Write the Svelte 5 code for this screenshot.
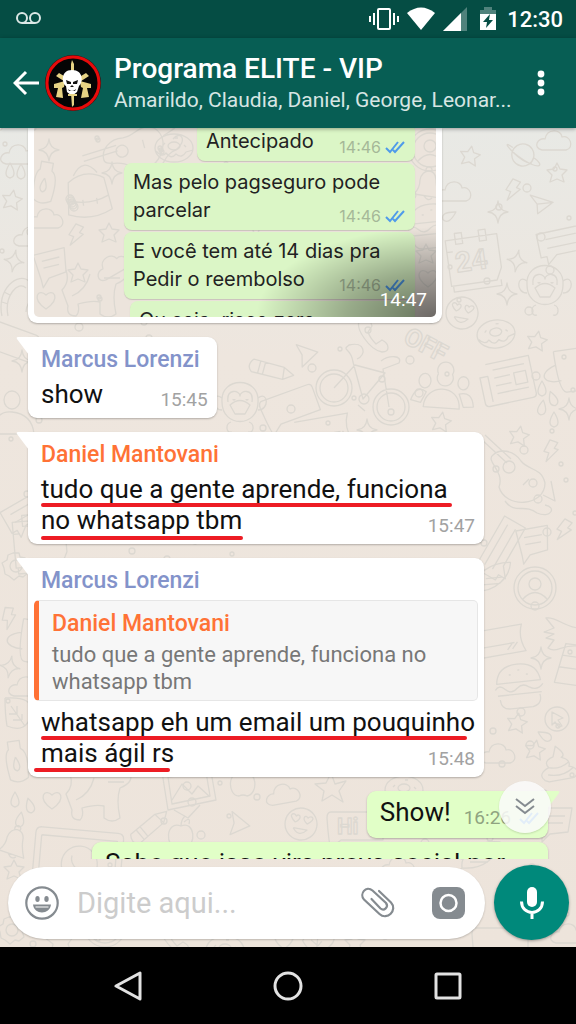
<script lang="ts">
    type Message = {
        author?: string;
        tone?: string;
        text: string;
        time: string;
        wide?: boolean;
        quote?: { author: string; text: string };
        marks?: number[][];
    };

    const contact = {
        name: 'Programa ELITE - VIP',
        members: 'Amarildo, Claudia, Daniel, George, Leonar...',
    };

    const forwarded = [
        { text: 'Antecipado', time: '14:46', size: 'short' },
        { text: 'Mas pelo pagseguro pode\nparcelar', time: '14:46', size: 'full' },
        { text: 'E você tem até 14 dias pra\nPedir o reembolso', time: '14:46', size: 'full' },
        { text: 'Ou seja, risco zero', time: '', size: 'medium' },
    ];

    // marks: [x1, x2, y] of each red pen stroke, from the bubble's corner
    const messages: Message[] = [
        { author: 'Marcus Lorenzi', tone: 'blue', text: 'show', time: '15:45' },
        {
            author: 'Daniel Mantovani',
            tone: 'orange',
            text: 'tudo que a gente aprende, funciona\nno whatsapp tbm',
            time: '15:47',
            wide: true,
            marks: [[15, 422, 73], [15, 213, 106]],
        },
        {
            author: 'Marcus Lorenzi',
            tone: 'blue',
            text: 'whatsapp eh um email um pouquinho\nmais ágil rs',
            time: '15:48',
            wide: true,
            quote: { author: 'Daniel Mantovani', text: 'tudo que a gente aprende, funciona no whatsapp tbm' },
            marks: [[15, 437, 180], [8, 140, 212]],
        },
    ];

    const shapes: Record<string, string> = {
        star: 'M0-10L3-4 10-3 5 2 7 9 0 6-7 9-5 2-10-3-3-4Z',
        sparkle: 'M0-11Q1-1 10 0Q1 1 0 11Q-1 1-10 0Q-1-1 0-11Z',
        bolt: 'M-2-11L6-9 3-3 7-2-4 11-2 2-7 1Z',
        heart: 'M0 9C-16-2-7-12 0-5C7-12 16-2 0 9Z',
        drop: 'M0-8Q8 5 0 7Q-8 5 0-8Z',
        plane: 'M-12-7L12-6 0 9-3 0ZM-3 0L12-6',
        tri: 'M-9-11L11 0-7 12-5 0Z',
        cloud: 'M-14 8C-24 6-18-5-11-3C-9-14 5-13 6-5C14-8 19 6 10 8Z',
        planet: 'M-11 0A11 11 0 1 1 11 2A11 11 0 0 1-11 0M-11-5C-24-12-14-1 2 6C18 13 24 9 11 2M-11-1C-3 5 4 9 10 8',
        calendar: 'M-26-22H26V12L20 24H-26ZM-26-10H-20M-16-28H-9V-17H-16ZM8-28H15V-17H8ZM-24 24V30H24V24',
        lines: 'M-30-12H30V12H-14L-24 20V12H-30ZM-22-5H24M-22 4H24',
        monkey: 'M-18 0C-20-26 20-26 18 0C18 26-18 26-18 0M-18-4C-28-12-30 8-18 8M18-4C28-12 30 8 18 8M-12 0C-14-14 0-12 0-6C0-12 14-14 12 0M-10 3Q0-6 10 3L5 12H-5ZM-7-3A1 1 0 1 0-5-3M6-3A1 1 0 1 0 8-3M-9 20C-15 22-14 32-8 30M9 20C15 22 14 32 8 30',
        face: 'M-16 0A16 16 0 1 1 16 0A16 16 0 1 1-16 0M-6-1C-16-8-8-11-6-7C-3-11 1-6-6-1M6-1C16-8 8-11 6-7C3-11-1-6 6-1M-7 5H7Q0 14-7 5',
        donut: 'M-19 0A19 14 0 1 1 19 0A19 14 0 1 1-19 0M-6-2A6 4 0 1 1 6-2A6 4 0 1 1-6-2M-18 3Q-12 10-8 5Q-3 12 2 6Q8 11 12 4L19 2M-11-3L-9-5M10-3L12-1M1-10H4',
        bike: 'M-45 3A18 18 0 1 1-9 3A18 18 0 1 1-45 3M-41 3A14 14 0 1 1-13 3A14 14 0 1 1-41 3M12 22A18 18 0 1 1 48 22A18 18 0 1 1 12 22M16 22A14 14 0 1 1 44 22A14 14 0 1 1 16 22M-27 3L-6-20L24-12L2 14L-8-23C-10-38-20-34-12-40C4-44 6-30-4-26M28 22L22-16L38-22C42-30 28-30 20-24M-2 14A5 5 0 1 1 8 14A5 5 0 1 1-2 14M-3 20L4 26',
        people: 'M-7-22A8 8 0 1 1 7-22A8 8 0 1 1-7-22M-20 12C-20-12 16-14 16 12ZM-26-14A5 6 0 1 1-14-14A5 6 0 1 1-26-14M-33 6Q-28-10-18-3L-23 8ZM13-14A5 6 0 1 1 24-14A5 6 0 1 1 13-14M20 10L30 9Q28-7 15-3Z',
        news: 'M-20-20H24V18Q24 22 20 22H-24Q-28 22-28 18V-8H-20V18M-14-13H18M-14-5H2M-14 3H2M-14 11H18M6-6H18V6H6Z',
        cup: 'M-10-20H16V22H-2Q-10 22-10-20M-10-6C-30 0-24 12-6 10',
        guitar: 'M-34-36L-8-12M-30-40L-4-16M-22-20C-30-14-10-4-16 12C-10 34 30 32 30 8C26-8 14-4 6-14C-2-26-16-26-22-20M-12-8A6 6 0 1 1 0-8A6 6 0 1 1-12-8M8 10L14 4M-10 26C0 40 10 28 22 38C36 44 42 32 30 30M28 20L40 26 36 6',
        note: 'M-16-14H16L12 10-6 12-14 20-14 12ZM-9-6H9M-9 1H7',
        user: 'M-21 0A21 21 0 1 1 21 0A21 21 0 1 1-21 0M-17 0A17 17 0 1 1 17 0A17 17 0 1 1-17 0M-6-4A6 6 0 1 1 6-4A6 6 0 1 1-6-4M-12 11Q0-2 12 11',
        card: 'M-30-13H24Q18 0 24 14H-30M-30 4H14M6 10L12 4M11 10L17 4',
        burger: 'M-22-4Q-20-22 0-22Q20-22 22-4ZM-24 2Q-20-4-14 2Q-8 8-2 2Q4-3 10 2Q18 7 24 0M-22 8H22M-20 12Q-20 22-10 22H12Q22 20 20 10M-9-12H-7M0-16H2M8-11H10',
        cursor: 'M-12 0A12 12 0 1 1 12 0A12 12 0 1 1-12 0M-5-7L6-1 1 1 5 7 2 8-2 3-5 6Z',
        cream: 'M-16 16C-24 8-10 4-10 4C-16-4-4-6-4-6L0-16Q10-6 4-4C14 0 10 6 10 6C22 10 16 18 12 18H-12ZM-10 4Q0 8 10 2M-12 11Q2 16 14 8',
        hand: 'M-16-14C-6-16 0-6 16-4V14C0 12-6 22-14 16L-8 8-16 6-8 2-18 0-8-4Z',
        tower: 'M-12-20H10V20H-18ZM-14-8H8M-16 4H8',
        rocket: 'M-18 10C-20-8 2-18 20-16C18-2 4 12-18 10M-10 4H8M-6-2H10M-24 16L-18 10',
        gear: 'M-3-13H3L4-9 9-8 13-3 10 1 12 7 7 11 3 10-2 14-7 10-11 8-12 2-14-3-9-6-8-11ZM-6 0A6 6 0 1 1 6 0A6 6 0 1 1-6 0',
        leaf: 'M-12-16Q18-18 14 0Q10 20-10 12Q-12 0-12-16M-6-8L8 12M0 0V-8M0 0H-8M5 6V0M5 6H-4',
        bottle: 'M-6-20H6V-12Q14-8 10 18Q0 24-8 18Q-12-8-6-12ZM0-4Q6 8 0 10Q-6 8 0-4',
        person: 'M-8-14A8 9 0 1 1 8-14A8 9 0 1 1-8-14M-18 20Q-18-4 0-2Q20 0 22 20Z',
        dog: 'M-26-26Q-22-14-30-6L-24 10Q-26 20-16 20Q-12 16-14 8Q0 4 8 6V18Q16 24 24 18Q20 0 24-12Q38-18 34-26M-20 0Q-6-6-2-22M12-18H28',
        frame: 'M-26-20L22-26 28 8-20 18ZM-20-15L18-20 22 4-16 12ZM-16 8L-6-8 4 2 10-6 21 4M-14 18L0 26 12 13',
        pencil: 'M-18 6L8-12 20-14 16-3-10 16Q-18 16-18 6M8-12L16-3M-12 2L-5 12M-8-1L-1 9',
        apple: 'M0-8C-16-14-16 14-4 14Q0 12 4 14C16 12 14-14 0-8Q0-14 4-18M3-12Q10-18 8-10',
        bell: 'M-12 8Q-6 2-6-6C-4-18 10-18 10-6Q10 2 14 12ZM-2 10Q2 16 6 12M1-14A3 3 0 1 1 5-14',
        phone: 'M-14-16C-20-8-4 14 8 16C16 16 16 8 8 4L2 8Q-4 2-6-4L-2-10C-4-18-12-20-14-16Z',
        screen: 'M-44-20Q-44-26-38-26H38Q44-26 44-20V60H-44ZM-38-18H38V60M-38-18V60M-16 8A18 18 0 1 1 20 8A18 18 0 1 1-16 8M-6 0C-8 10 4 18 10 14',
        bubble: 'M-24-16H24Q28-16 28-12V12H-14L-24 20Q-26 18-28-10Q-28-16-24-16Z',
        wave: 'M-20 20C-26-6-4-26 8-14C18-2 4 4 4 16M-14 20C-18 0-4-16 4-8M-20 6L-14 8M-18-4L-12-1',
        bag: 'M-18-14Q0-26 18-14L22 18Q0 28-22 18ZM-12-20Q0-38 12-20M-20 4Q0 12 20 4M-6 5V11M8 5V11',
        fish: 'M0-14L4-3 15-6 8 4 12 15 1 8-9 14-7 4-16-3-5-4Z',
    };

    // name, x, y, rotation
    const doodles: [string, number, number, number][] = [
        ['cloud', 20, 156, 0], ['drop', 10, 171, 0], ['drop', 21, 172, 0], ['star', 12, 200, 10], ['cloud', 33, 238, 0],
        ['sparkle', 14, 261, 10], ['wave', 22, 296, 0], ['cloud', 556, 142, 0], ['planet', 523, 154, 8], ['star', 470, 156, 10],
        ['star', 557, 173, 0], ['cloud', 456, 193, 0], ['bolt', 513, 190, 10], ['sparkle', 498, 212, 0], ['plane', 540, 205, 15],
        ['drop', 449, 216, 60], ['calendar', 474, 259, -8], ['lines', 568, 240, -12], ['sparkle', 517, 261, 10], ['monkey', 545, 285, 0],
        ['sparkle', 507, 294, 0], ['face', 462, 313, 10], ['phone', 374, 336, 0], ['donut', 496, 334, -8],
        ['star', 537, 341, 10], ['tri', 307, 354, -10], ['bike', 361, 385, 0], ['people', 444, 396, 4], ['news', 509, 380, -12],
        ['cup', 566, 370, -8], ['drop', 542, 389, 0], ['drop', 553, 399, -20], ['drop', 542, 408, 10], ['drop', 554, 420, 0],
        ['sparkle', 569, 409, 0], ['pencil', 270, 369, 50], ['monkey', 240, 402, 0], ['card', 326, 430, -10],
        ['bubble', 290, 408, -20], ['star', 441, 422, 10], ['sparkle', 367, 430, 0], ['star', 519, 436, 10], ['bolt', 551, 451, 5],
        ['guitar', 515, 475, 0], ['note', 534, 542, -10], ['bolt', 564, 530, 15], ['lines', 500, 548, -60], ['user', 535, 588, 0],
        ['rocket', 492, 580, -5], ['card', 500, 641, -10], ['hand', 562, 632, 0], ['sparkle', 541, 658, 0], ['tower', 575, 665, 8],
        ['burger', 519, 686, -6], ['star', 517, 723, 10], ['cursor', 557, 719, 0], ['star', 535, 750, 10], ['cream', 558, 762, -10],
        ['cloud', 500, 755, 0], ['drop', 545, 736, -60], ['person', 12, 414, 0], ['sparkle', 22, 361, 0], ['bubble', 8, 342, 20],
        ['lines', 32, 508, -30], ['calendar', 40, 542, -5], ['gear', 16, 566, 0], ['bolt', 9, 618, -10], ['cup', 30, 640, 10],
        ['sparkle', 10, 667, 10], ['cloud', 28, 688, 0], ['leaf', 17, 714, 0], ['bottle', 16, 761, -8], ['drop', 15, 800, 0],
        ['drop', 30, 806, -15], ['drop', 20, 820, 10], ['heart', 52, 800, 0], ['dog', 96, 800, 0], ['frame', 188, 792, 0],
        ['apple', 243, 782, 0], ['cloud', 285, 795, -10], ['pencil', 148, 827, -5], ['apple', 181, 834, 0], ['tri', 239, 824, 10],
        ['bell', 12, 844, 10], ['screen', 78, 856, 5], ['star', 14, 870, 0], ['fish', 331, 787, 0], ['face', 301, 824, 10],
        ['bubble', 355, 828, 0], ['donut', 404, 790, 0], ['gear', 12, 930, 0], ['user', 105, 926, 0], ['donut', 225, 950, 0],
        ['star', 355, 943, 0], ['heart', 284, 940, 0], ['leaf', 318, 938, 40], ['note', 556, 822, 0], ['rocket', 480, 858, 0],
        ['cloud', 400, 868, 0], ['cloud', 570, 935, 0], ['bubble', 500, 944, 0], ['fish', 60, 940, 0], ['phone', 175, 938, 0],
    ];

    const photoDoodles: [string, number, number, number][] = [
        ['guitar', 98, 22, -60], ['bag', 54, 66, -8], ['star', 75, 105, 0], ['bolt', 42, 107, 10], ['sparkle', 78, 45, 0],
        ['bottle', 10, 54, 10], ['note', 18, 137, -14], ['cloud', 14, 92, 0], ['star', 44, 145, 0], ['dog', 58, 168, 0],
        ['cloud', 80, 138, -30], ['heart', 12, 172, 0], ['donut', 140, 20, 0], ['user', 396, 22, 0], ['bell', 392, 58, 0],
        ['burger', 398, 98, -6], ['star', 392, 126, 0], ['heart', 394, 150, 0], ['sparkle', 15, 22, 0],
    ];

    function dots(count: number, width: number, height: number) {
        return Array.from({ length: count }, (_, i) => ({
            x: (i * 137 + (i % 7) * 19) % width,
            y: (i * 89 + (i % 5) * 31) % height,
            r: 2 + (i % 3),
        }));
    }
</script>

{#snippet wallpaper(items: [string, number, number, number][], top: number, height: number, width: number, count: number)}
    <svg class="wallpaper" viewBox="0 {top} {width} {height}" preserveAspectRatio="xMidYMin slice" aria-hidden="true">
        {#each dots(count, width, height) as dot}
            <circle cx={dot.x} cy={dot.y + top} r={dot.r} />
        {/each}
        {#each items as [name, x, y, angle]}
            <path d={shapes[name]} transform="translate({x} {y}) rotate({angle})" />
        {/each}
        {#if top > 0}
            <text x="455" y="270" font-size="28" transform="rotate(-8 474 258)">24</text>
            <text x="402" y="342" font-size="25" transform="rotate(28 402 342)">OFF</text>
            <text x="337" y="834" font-size="22">Hi</text>
        {/if}
    </svg>
{/snippet}

{#snippet ticks()}
    <svg class="ticks" viewBox="0 0 20 14" aria-hidden="true">
        <path d="M1 8l4 4L13 2M8 10l2 2L19 2" />
    </svg>
{/snippet}

<div class="screen">
    <div class="status-bar">
        <svg width="26" height="14" viewBox="0 0 26 14" fill="none" stroke="#dce8e6" stroke-width="2">
            <circle cx="6" cy="6" r="5" />
            <circle cx="19" cy="6" r="5" />
            <path d="M6 11H19" />
        </svg>
        <div class="status-icons">
            <svg width="30" height="24" viewBox="0 0 30 24" fill="none" stroke="#fff" stroke-width="2">
                <rect x="9" y="2" width="12" height="20" rx="1" />
                <path d="M5 6V18M25 6V18M1 9V15M29 9V15" />
            </svg>
            <svg width="28" height="24" viewBox="0 0 28 24" fill="#fff">
                <path d="M0 6Q14-5 28 6L14 23Z" />
            </svg>
            <svg width="24" height="24" viewBox="0 0 24 24">
                <path d="M24 0V24H0Z" fill="#fff" fill-opacity=".3" />
                <path d="M18 6V24H0Z" fill="#fff" />
            </svg>
            <svg class="battery" width="16" height="24" viewBox="0 0 16 24">
                <path d="M4 0H12V3H16V7H0V3H4Z" fill="#fff" fill-opacity=".3" />
                <path d="M0 7H16V23H0ZM10 7L3 15H7L6 21 13 13H9Z" fill="#fff" fill-rule="evenodd" />
            </svg>
            <time>12:30</time>
        </div>
    </div>

    <header class="app-bar">
        <button class="icon-button back" aria-label="Voltar">
            <svg width="26" height="26" viewBox="0 0 26 26" fill="none" stroke="#fff" stroke-width="3">
                <path d="M26 13H2M13 2L2 13L13 24" />
            </svg>
        </button>
        <svg class="avatar" viewBox="0 0 56 56" aria-hidden="true">
            <circle cx="28" cy="28" r="28" fill="#3a1010" />
            <circle cx="28" cy="28" r="26" fill="#050505" stroke="#e60b0b" stroke-width="3" />
            <g fill="#e6d384">
                <path d="M26 18V9L27 5L29 9V18ZM26 38H29V50L27 52Z" />
                <path d="M11 21L14 18L24 24L22 28ZM44 21L41 18L31 24L33 28Z" />
                <path d="M9 29L20 26L19 32L17 33L18 43L11 42L13 33H9ZM46 29L35 26L36 32L38 33L36 43L44 42L42 33H46Z" />
            </g>
            <path d="M27 15C15 15 17 29 21 31L22 37Q27 42 32 37L34 31C38 28 39 15 27 15Z" fill="#fff" />
            <path d="M21 25L26 27V29H22ZM33 25L28 27V29H32ZM27 30L25 32H29ZM23 34Q27 38 31 34L30 36H24Z" fill="#111" />
            <path d="M23 40H32" stroke="#e6d384" stroke-width="2" />
        </svg>
        <div class="contact">
            <h1>{contact.name}</h1>
            <p>{contact.members}</p>
        </div>
        <button class="icon-button menu" aria-label="Mais opções">
            <svg width="8" height="26" viewBox="0 0 8 26" fill="#fff">
                <circle cx="4" cy="4" r="3.4" />
                <circle cx="4" cy="13" r="3.4" />
                <circle cx="4" cy="22" r="3.4" />
            </svg>
        </button>
    </header>

    <main class="chat">
        {@render wallpaper(doodles, 128, 819, 576, 170)}

        <div class="messages">
            <article class="photo-bubble">
                <div class="photo">
                    {@render wallpaper(photoDoodles, 0, 189, 402, 50)}
                    {#each forwarded as item}
                        <div class="forwarded {item.size}">
                            <p>{item.text}</p>
                            {#if item.time}
                                <span class="forwarded-time">{item.time}{@render ticks()}</span>
                            {/if}
                        </div>
                    {/each}
                    <time class="photo-time">14:47</time>
                </div>
            </article>

            {#each messages as message}
                <article class="bubble incoming" class:wide={message.wide}>
                    <svg class="tail" viewBox="0 0 13 18" aria-hidden="true"><path d="M13 0H2Q0 0 1 2L13 18Z" /></svg>
                    <h2 class="author {message.tone}">{message.author}</h2>
                    {#if message.quote}
                        <blockquote>
                            <h3 class="orange">{message.quote.author}</h3>
                            <p>{message.quote.text}</p>
                        </blockquote>
                    {/if}
                    <div class="body">
                        <p>{message.text}</p>
                        <time>{message.time}</time>
                    </div>
                    {#if message.marks}
                        <svg class="marks" aria-hidden="true">
                            {#each message.marks as [x1, x2, y]}
                                <path d="M{x1} {y}H{x2}" />
                            {/each}
                        </svg>
                    {/if}
                </article>
            {/each}

            <article class="bubble outgoing">
                <svg class="tail" viewBox="0 0 13 18" aria-hidden="true"><path d="M0 0H11Q13 0 12 2L0 18Z" /></svg>
                <p>Show!</p>
                <time>16:26{@render ticks()}</time>
            </article>
            <article class="bubble outgoing next">
                <p>Sabe que isso vira prova social por</p>
            </article>

            <button class="scroll-down" aria-label="Ir para o fim">
                <svg width="20" height="20" viewBox="0 0 20 20" fill="none" stroke="#858b90" stroke-width="2">
                    <path d="M1 2L10 9L19 2M1 9L10 16L19 9" />
                </svg>
            </button>
        </div>

        <form class="composer">
            <div class="field">
                <button type="button" class="icon-button" aria-label="Emoji">
                    <svg width="34" height="34" viewBox="0 0 34 34" fill="#858b90">
                        <circle cx="17" cy="17" r="15.7" fill="none" stroke="#858b90" stroke-width="2.2" />
                        <ellipse cx="12.5" cy="13" rx="2.2" ry="3" />
                        <ellipse cx="21.5" cy="13" rx="2.2" ry="3" />
                        <path d="M8 18.500H26C25 29 9 29 8 18.500ZM10.500 20.500V21.500H23.500V20.500Z" fill-rule="evenodd" />
                    </svg>
                </button>
                <input type="text" placeholder="Digite aqui..." aria-label="Mensagem" />
                <button type="button" class="icon-button clip" aria-label="Anexar">
                    <svg width="34" height="32" viewBox="0 0 34 32" fill="none" stroke="#858b90" stroke-width="2.2" stroke-linecap="round">
                        <path d="M18 4L30 15.500C37 23 26 34 18.500 27L3 12.500C-2 7 5-2 11.500 3.500L25 16C28 20 23 24.500 19.500 21.500L10.500 12" />
                    </svg>
                </button>
                <button type="button" class="icon-button" aria-label="Câmera">
                    <svg width="33" height="32" viewBox="0 0 33 32">
                        <rect width="33" height="32" rx="8" fill="#858b90" />
                        <circle cx="16.500" cy="16" r="8" fill="none" stroke="#fff" stroke-width="2.5" />
                    </svg>
                </button>
            </div>
            <button type="button" class="mic" aria-label="Gravar áudio">
                <svg width="24" height="34" viewBox="0 0 24 34">
                    <rect x="7" y="1" width="10" height="20" rx="5" fill="#fff" />
                    <path d="M1.500 15.500C1.500 30 22.500 30 22.500 15.500M12 26V33" fill="none" stroke="#fff" stroke-width="3" />
                </svg>
            </button>
        </form>
    </main>

    <nav class="nav-bar">
        <button class="icon-button" aria-label="Retornar">
            <svg width="28" height="30" viewBox="0 0 28 30"><path d="M26 2V28L2 15Z" /></svg>
        </button>
        <button class="icon-button" aria-label="Início">
            <svg width="30" height="30" viewBox="0 0 30 30"><circle cx="15" cy="15" r="13" /></svg>
        </button>
        <button class="icon-button" aria-label="Recentes">
            <svg width="28" height="28" viewBox="0 0 28 28"><rect x="2" y="2" width="24" height="24" rx="1" /></svg>
        </button>
    </nav>
</div>

<style>
    :global(body) {
        margin: 0;
        background: #000;
    }

    .screen {
        display: flex;
        flex-direction: column;
        height: 100vh;
        font-family: Roboto, "Noto Sans", sans-serif;
        color: #111;
    }

    h1,
    h2,
    h3,
    p,
    blockquote {
        margin: 0;
        font-weight: 400;
    }

    svg {
        flex: none;
    }

    .icon-button {
        display: flex;
        align-items: center;
        justify-content: center;
        padding: 0;
        border: 0;
        background: none;
    }

    .status-bar {
        display: flex;
        align-items: center;
        justify-content: space-between;
        height: 38px;
        padding: 0 13px 0 16px;
        background: #054d44;
        color: #fff;
        font-size: 22px;
        font-weight: 500;
    }

    .status-icons {
        display: flex;
        align-items: center;
        gap: 8px;
    }

    .battery {
        margin: 0 3px 0 5px;
    }

    .app-bar {
        position: relative;
        z-index: 1;
        display: flex;
        align-items: center;
        height: 90px;
        padding: 0 23px 0 13px;
        box-sizing: border-box;
        background: #075e54;
        color: #fff;
        box-shadow: 0 1px 4px rgba(0, 0, 0, 0.35);
    }

    .avatar {
        width: 56px;
        height: 56px;
        margin: 0 13px 0 6px;
    }

    .contact {
        flex: 1;
        min-width: 0;
    }

    .contact h1 {
        font-size: 28px;
        font-weight: 500;
        line-height: 34px;
    }

    .contact p {
        overflow: hidden;
        color: #d6e5e3;
        font-size: 21px;
        line-height: 28px;
        white-space: nowrap;
        text-overflow: ellipsis;
    }

    .menu {
        width: 24px;
    }

    .chat {
        position: relative;
        display: flex;
        flex: 1;
        flex-direction: column;
        min-height: 0;
        overflow: hidden;
        background: linear-gradient(#e8e9e5, #eee6de 28%, #ede4db);
    }

    .wallpaper {
        position: absolute;
        inset: 0;
        width: 100%;
        height: 100%;
        fill: none;
        stroke: #dcd8d1;
        stroke-width: 1.3;
        stroke-linejoin: round;
    }

    .wallpaper text {
        font-weight: 700;
    }

    .messages {
        position: relative;
        display: flex;
        flex: 1;
        flex-direction: column;
        align-items: flex-start;
        gap: 14px;
        min-height: 0;
        padding: 0 28px;
        overflow: hidden;
    }

    .photo-bubble {
        flex: none;
        align-self: stretch;
        margin-right: 106px;
        padding: 0 6px 6px;
        border-radius: 0 0 9px 9px;
        background: #fff;
        box-shadow: 0 1px 2px rgba(0, 0, 0, 0.25);
    }

    .photo {
        position: relative;
        display: flex;
        flex-direction: column;
        align-items: flex-end;
        gap: 2px;
        height: 189px;
        padding-right: 21px;
        border-radius: 0 0 5px 5px;
        overflow: hidden;
        background: #ece4dc;
        font-family: Inter, "Liberation Sans", sans-serif;
    }

    .photo::after {
        content: "";
        position: absolute;
        right: 0;
        bottom: 0;
        width: 180px;
        height: 90px;
        background: radial-gradient(farthest-side at bottom right, rgba(0, 0, 0, 0.54), rgba(0, 0, 0, 0.3) 50%, transparent);
    }

    .forwarded {
        position: relative;
        flex: none;
        box-sizing: border-box;
        padding: 5px 9px 6px;
        border-radius: 8px;
        background: #dbf6c6;
        box-shadow: 0 1px 1px rgba(0, 0, 0, 0.15);
        color: #222;
        font-size: 20px;
        line-height: 28px;
    }

    .forwarded:nth-of-type(1) {
        margin-top: -6px;
    }

    .forwarded p {
        white-space: pre;
    }

    .short {
        width: 218px;
    }

    .full {
        width: 291px;
    }

    .medium {
        width: 285px;
    }

    .forwarded-time {
        position: absolute;
        right: 10px;
        bottom: 4px;
        display: flex;
        align-items: center;
        gap: 4px;
        color: #a5b898;
        font-size: 16px;
        line-height: 20px;
    }

    .ticks {
        width: 20px;
        height: 14px;
        fill: none;
        stroke: #4f9bea;
        stroke-width: 2;
    }

    .photo-time {
        position: absolute;
        right: 9px;
        bottom: 5px;
        z-index: 1;
        color: #fff;
        font-family: Roboto, sans-serif;
        font-size: 19px;
        line-height: 24px;
    }

    .bubble {
        position: relative;
        flex: none;
        box-sizing: border-box;
        padding: 9px 9px 8px 13px;
        border-radius: 9px;
        font-size: 26px;
        line-height: 31px;
        box-shadow: 0 1px 2px rgba(0, 0, 0, 0.25);
    }

    .bubble p {
        white-space: pre-line;
    }

    .incoming {
        border-top-left-radius: 0;
        background: #fff;
    }

    .wide {
        align-self: stretch;
        margin-right: 64px;
    }

    .tail {
        position: absolute;
        top: 0;
        left: -12px;
        width: 13px;
        height: 18px;
        fill: #fff;
    }

    .author {
        margin-bottom: 5px;
        padding-right: 8px;
        font-size: 23px;
        font-weight: 500;
        line-height: 28px;
    }

    .blue {
        color: #8393ca;
    }

    .orange {
        color: #ff7236;
    }

    .body {
        display: grid;
        align-items: end;
    }

    .body > * {
        grid-area: 1 / 1;
    }

    .body p {
        justify-self: start;
    }

    .bubble time {
        justify-self: end;
        color: #a2a2a2;
        font-size: 19px;
        line-height: 20px;
    }

    blockquote {
        margin: 0 -3px 6px -7px;
        padding: 9px 12px 5px 13px;
        border: 1px solid #e6e6e6;
        border-left: 5px solid #ff7236;
        border-radius: 5px;
        background: #f7f7f7;
        color: #777;
        font-size: 22px;
        line-height: 27px;
    }

    blockquote h3 {
        margin-bottom: 3px;
        font-size: 23px;
        font-weight: 500;
        line-height: 28px;
    }

    .marks {
        position: absolute;
        inset: 0;
        width: 100%;
        height: 100%;
        fill: none;
        stroke: #ed1c24;
        stroke-width: 4;
        stroke-linecap: round;
    }

    .outgoing {
        display: flex;
        align-items: flex-end;
        align-self: flex-end;
        gap: 13px;
        padding-top: 6px;
        padding-bottom: 10px;
        border-top-right-radius: 0;
        background: #e1ffc7;
    }

    .outgoing .tail {
        right: -12px;
        left: auto;
        fill: #e1ffc7;
    }

    .outgoing time {
        display: flex;
        align-items: center;
        gap: 8px;
        color: #8fa380;
    }

    .next {
        align-self: stretch;
        margin: -10px 0 0 64px;
        border-radius: 9px;
    }

    .scroll-down {
        position: absolute;
        right: 25px;
        bottom: 26px;
        display: grid;
        place-items: center;
        width: 52px;
        height: 52px;
        padding: 0;
        border: 0;
        border-radius: 50%;
        background: rgba(250, 250, 250, 0.86);
        box-shadow: 0 1px 2px rgba(0, 0, 0, 0.15);
    }

    .composer {
        position: relative;
        display: flex;
        align-items: center;
        gap: 9px;
        padding: 6px 7px 7px 8px;
    }

    .field {
        display: flex;
        flex: 1;
        align-items: center;
        gap: 18px;
        min-width: 0;
        height: 72px;
        padding: 0 20px 0 17px;
        box-sizing: border-box;
        border-radius: 36px;
        background: #fff;
        box-shadow: 0 1px 2px rgba(0, 0, 0, 0.2);
    }

    .field input {
        flex: 1;
        min-width: 0;
        padding: 0;
        border: 0;
        outline: 0;
        background: none;
        color: #111;
        font: 400 29px Roboto, sans-serif;
    }

    .field input::placeholder {
        color: #ccc;
        opacity: 1;
    }

    .clip {
        margin-right: 19px;
    }

    .mic {
        display: grid;
        flex: none;
        place-items: center;
        width: 75px;
        height: 75px;
        padding: 0;
        border: 0;
        border-radius: 50%;
        background: #00897b;
        box-shadow: 0 1px 3px rgba(0, 0, 0, 0.35);
    }

    .nav-bar {
        display: grid;
        grid-template-columns: repeat(3, 1fr);
        height: 77px;
        padding: 0 48px;
        background: #000;
    }

    .nav-bar svg {
        fill: none;
        stroke: #e2e2e2;
        stroke-width: 3;
        stroke-linejoin: round;
    }
</style>
